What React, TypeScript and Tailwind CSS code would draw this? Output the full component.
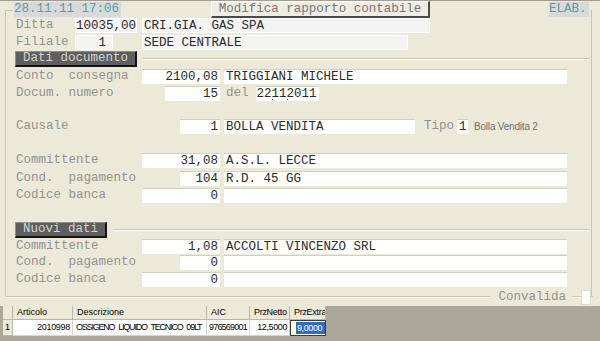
import React from 'react';

const mono = "font-['Liberation_Mono','Courier_New',monospace] text-[12.5px]";
const sans = "font-['Liberation_Sans',Arial,sans-serif]";

type BoxProps = { className: string; children?: React.ReactNode };

// white edit field, sunken look
const Field: React.FC<BoxProps> = ({ className, children }) => (
  <div className={`h-[15px] leading-[15px] bg-white border-t border-[#d3cfbe] text-[#2a2a2a] whitespace-pre overflow-hidden ${className}`}>
    {children}
  </div>
);

// read-only field (Ditta / Filiale)
const RoField: React.FC<BoxProps> = ({ className, children }) => (
  <div className={`h-[15px] leading-[14px] bg-[#f3f3f3] border border-white text-[#2a2a2a] whitespace-pre overflow-hidden ${className}`}>
    {children}
  </div>
);

const Label: React.FC<BoxProps> = ({ className, children }) => (
  <span className={`pl-[10px] text-[#929292] whitespace-pre ${className}`}>{children}</span>
);

const Groove = () => (
  <div className="flex-1 self-center h-[2px] border-t border-[#c9c5b2] border-b border-b-white" />
);

const SectionTitle: React.FC<BoxProps> = ({ className, children }) => (
  <div className="flex items-center">
    <div
      className={`ml-[9px] h-[16px] leading-[13px] pl-[7px] bg-[#5e5e5e] text-[#d2d2d2] border-t border-l border-[#8e8e8e] border-b-2 border-r-2 border-b-[#141414] border-r-[#141414] ${className}`}
    >
      {children}
    </div>
  </div>
);

// label, right-aligned value inside 142..220 slot, name field 224..567
const DataRow: React.FC<{ label: string; value: string; valueW: string; name: string; className: string }> = ({
  label,
  value,
  valueW,
  name,
  className,
}) => (
  <div className={`flex items-center h-[16px] ${className}`}>
    <Label className="w-[136px]">{label}</Label>
    <div className="w-[78px] flex justify-end">
      <Field className={`${valueW} text-right pr-[2px]`}>{value}</Field>
    </div>
    <Field className="ml-[4px] w-[343px] pl-[2px]">{name}</Field>
  </div>
);

const head = 'bg-[#ece9d8] border-r border-b border-[#b9b6a8] h-[14px] leading-[13px] pl-[4px] text-black whitespace-nowrap overflow-hidden';
const cell = 'bg-white border-r border-b border-[#d8d5c8] h-[16px] leading-[15px] text-black overflow-hidden whitespace-nowrap';

export default function App() {
  return (
    <div className={`w-[600px] h-[341px] bg-[#ece9d8] overflow-hidden flex flex-col ${mono}`}>
      <div className="h-[306px] shrink-0 flex flex-col border-t border-[#9f9d92]">
        {/* header strip */}
        <div className="flex items-start h-[16px]">
          <div className="ml-[14px] mt-[1px] w-[107px] h-[15px] leading-[15px] bg-[#d9d9d9] text-[#4aa3b3]">28.11.11 17:06</div>
          <div className="ml-[90px] w-[219px] h-[17px] leading-[15px] text-center bg-[#eeece3] text-[#757575] border-t border-l border-white border-b-2 border-r-2 border-b-[#4a4a4a] border-r-[#4a4a4a]">
            Modifica rapporto contabile
          </div>
          <div className="ml-[119px] mt-[1px] w-[40px] h-[15px] leading-[15px] bg-[#d9d9d9] text-[#4aa3b3]">ELAB.</div>
        </div>

        {/* group box */}
        <div className="-mt-[7px] ml-[5px] w-[587px] h-[287px] border-l border-r border-[#c9c5b2] flex flex-col">
          <div className="w-[7px] border-t border-[#c9c5b2]" />

          <div className="flex items-center h-[16px] mt-[6px]">
            <Label className="w-[69px]">Ditta</Label>
            <RoField className="w-[62px] text-right">10035,00</RoField>
            <RoField className="ml-[5px] w-[288px] pl-[1px]">CRI.GIA. GAS SPA</RoField>
          </div>
          <div className="flex items-center h-[16px] mt-[1px]">
            <Label className="w-[69px]">Filiale</Label>
            <RoField className="w-[38px] text-right pr-[6px]">1</RoField>
            <RoField className="ml-[29px] w-[266px] pl-[1px]">SEDE CENTRALE</RoField>
          </div>

          <div className="flex items-center mt-[1px]">
            <SectionTitle className="w-[122px]">Dati documento</SectionTitle>
            <div className="ml-[6px] mr-[1px] flex-1 flex">
              <Groove />
            </div>
          </div>

          <DataRow className="mt-[1px]" label="Conto  consegna" value="2100,08" valueW="w-[78px]" name="TRIGGIANI MICHELE" />
          <div className="flex items-center h-[16px] mt-[1px]">
            <Label className="w-[136px]">Docum. numero</Label>
            <div className="w-[78px] flex justify-end">
              <Field className="w-[55px] text-right pr-[2px]">15</Field>
            </div>
            <span className="ml-[6px] text-[#929292]">del</span>
            <Field className="ml-[7px] w-[63px] pl-[1px] relative">
              22112011
              <span className="absolute left-[16px] bottom-[1px] w-px h-px bg-[#555]" />
              <span className="absolute left-[31px] bottom-[1px] w-px h-px bg-[#555]" />
            </Field>
          </div>

          <div className="flex items-center h-[16px] mt-[17px]">
            <Label className="w-[136px]">Causale</Label>
            <div className="w-[78px] flex justify-end">
              <Field className="w-[40px] text-right pr-[2px]">1</Field>
            </div>
            <Field className="ml-[4px] w-[191px] pl-[2px]">BOLLA VENDITA</Field>
            <span className="ml-[9px] text-[#929292]">Tipo</span>
            <Field className="ml-[3px] w-[11px] pl-[2px]">1</Field>
            <span className={`ml-[6px] text-[10px] tracking-[-0.2px] text-[#6e6e6e] ${sans}`}>Bolla Vendita 2</span>
          </div>

          <DataRow className="mt-[18px]" label="Committente" value="31,08" valueW="w-[78px]" name="A.S.L. LECCE" />
          <DataRow className="mt-[2px]" label="Cond.  pagamento" value="104" valueW="w-[40px]" name="R.D. 45 GG" />
          <DataRow className="mt-[1px]" label="Codice banca" value="0" valueW="w-[78px]" name="" />

          <div className="flex items-center mt-[19px]">
            <SectionTitle className="w-[92px]">Nuovi dati</SectionTitle>
            <div className="ml-[6px] mr-[1px] flex-1 flex">
              <Groove />
            </div>
          </div>

          <DataRow className="mt-0" label="Committente" value="1,08" valueW="w-[78px]" name="ACCOLTI VINCENZO SRL" />
          <DataRow className="mt-0" label="Cond.  pagamento" value="0" valueW="w-[40px]" name="" />
          <DataRow className="mt-[1px]" label="Codice banca" value="0" valueW="w-[78px]" name="" />
        </div>

        {/* bottom edge of the group box with Convalida */}
        <div className="-mt-[8px] ml-[5px] w-[588px] h-[16px] flex items-center">
          <Groove />
          <span className="ml-[7px] text-[#929292]">Convalida</span>
          <div className="ml-[6px] w-[9px] self-center h-[2px] border-t border-[#c9c5b2] border-b border-b-white" />
          <div className="w-[10px] h-[15px] bg-white border border-[#dedbd0]" />
          <div className="w-[2px] self-center h-[2px] border-t border-[#c9c5b2]" />
        </div>
      </div>

      {/* grid */}
      <div className={`flex-1 bg-[#aba899] pl-[3px] text-[9px] ${sans}`}>
        <div className="grid grid-cols-[10px_60px_134px_43px_40px_36px] w-[323px]">
          <div className={head} />
          <div className={head}>Articolo</div>
          <div className={head}>Descrizione</div>
          <div className={head}>AIC</div>
          <div className={`${head} pl-[2px] tracking-[-0.3px]`}>PrzNetto</div>
          <div className={`${head} pl-[3px] tracking-[-0.3px]`}>PrzExtra</div>

          <div className="bg-[#ece9d8] border-r border-b border-[#b9b6a8] h-[16px] leading-[15px] pl-[2px] text-black">1</div>
          <div className={`${cell} text-right pr-[2px] tracking-[-0.3px]`}>2010998</div>
          <div className={`${cell} pl-[3px] tracking-[-1.2px] [word-spacing:2.5px]`}>OSSIGENO LIQUIDO TECNICO 09LT</div>
          <div className={`${cell} pl-[2px] tracking-[-0.8px]`}>976569001</div>
          <div className={`${cell} text-right pr-[2px] tracking-[-0.4px]`}>12,5000</div>
          <div className="h-[16px] bg-[#ffffe1] border border-[#3a3a3a] pl-[5px] pt-px">
            <span className="block h-[12px] leading-[12px] bg-[#316ac5] text-white pl-[1px] tracking-[-0.4px]">9,0000</span>
          </div>
        </div>
      </div>
    </div>
  );
}
